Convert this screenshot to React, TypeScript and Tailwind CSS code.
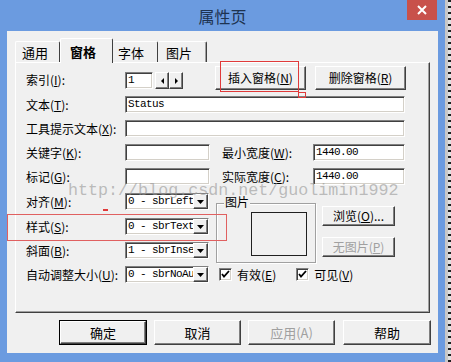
import React from "react";

const sunken =
  "border border-t-[#808080] border-l-[#808080] border-b-white border-r-white shadow-[inset_1px_1px_0_#404040,inset_-1px_-1px_0_#d4d0c8]";
const raised =
  "border border-t-white border-l-white border-b-[#404040] border-r-[#404040] shadow-[inset_-1px_-1px_0_#808080]";

function Label({ text, k, w = "w-[99px]" }: { text: string; k: string; w?: string }) {
  return (
    <div className={`${w} shrink-0 text-[12px] leading-none text-black whitespace-nowrap`}>
      {text}(<span className="underline">{k}</span>):
    </div>
  );
}

function Field({ w, value = "" }: { w: string; value?: string }) {
  return (
    <div
      className={`${w} h-[17px] bg-white ${sunken} flex items-center pl-[2px] font-['Liberation_Mono',monospace] text-[11px] tracking-[-0.6px] text-black overflow-hidden whitespace-nowrap`}
    >
      {value}
    </div>
  );
}

function Combo({ value }: { value: string }) {
  return (
    <div className={`w-[84px] h-[17px] bg-white ${sunken} flex items-stretch`}>
      <div className="flex-1 overflow-hidden whitespace-nowrap pl-[2px] pt-[1px] font-['Liberation_Mono',monospace] text-[11px] tracking-[-0.6px] text-black leading-[13px]">
        {value}
      </div>
      <div className={`w-[15px] bg-[#f0f0f0] ${raised} flex items-center justify-center`}>
        <svg width="7" height="4" viewBox="0 0 7 4">
          <path d="M0 0h7L3.5 4z" fill="#000" />
        </svg>
      </div>
    </div>
  );
}

function Btn({
  children,
  w,
  h,
  disabled = false,
  def = false,
  text = "text-[12px]",
}: {
  children: React.ReactNode;
  w: string;
  h: string;
  disabled?: boolean;
  def?: boolean;
  text?: string;
}) {
  const inner = (
    <div
      className={`w-full h-full bg-[#f0f0f0] ${raised} flex items-center justify-center ${text} leading-none ${
        disabled ? "text-[#a0a0a0]" : "text-black"
      } whitespace-nowrap`}
    >
      {children}
    </div>
  );
  if (def) {
    return <div className={`${w} ${h} border border-black shrink-0`}>{inner}</div>;
  }
  return <div className={`${w} ${h} shrink-0`}>{inner}</div>;
}

function Check({ label, k }: { label: string; k: string }) {
  return (
    <div className="flex items-center">
      <div className={`w-[13px] h-[13px] bg-white ${sunken} flex items-center justify-center`}>
        <svg width="9" height="9" viewBox="0 0 9 9">
          <path d="M1 4l2 2.5L8 1" stroke="#000" strokeWidth="1.8" fill="none" />
        </svg>
      </div>
      <span className="ml-[5px] text-[12px] leading-none text-black">
        {label}(<span className="underline">{k}</span>)
      </span>
    </div>
  );
}

export default function App() {
  return (
    <div className="relative w-[451px] h-[362px] flex overflow-hidden bg-[#6b9be0] font-['Noto_Sans_CJK_SC','Noto_Sans',sans-serif]">
      <div className="w-[445px] h-full flex flex-col">
        {/* title bar */}
        <div className="relative h-[31px] shrink-0 flex items-center justify-center">
          <span className="text-[16px] leading-none text-[#1e3350]">属性页</span>
          <div className="absolute right-[8px] top-0 w-[30px] h-[20px] bg-[#c8514b] flex items-center justify-center">
            <svg width="10" height="10" viewBox="0 0 10 10">
              <path d="M1 1l8 8M9 1l-8 8" stroke="#fff" strokeWidth="2" />
            </svg>
          </div>
        </div>
        {/* client */}
        <div className="mx-[7px] h-[322px] bg-[#f0f0f0] flex flex-col">
          {/* tabs */}
          <div className="h-[31px] flex items-end pl-[8px] pt-[7px]">
            <div className="w-[45px] h-[21px] border-t border-l border-white border-r border-r-[#404040] rounded-t-[2px] flex items-center pl-[6px] text-[13px] leading-none text-black">
              通用
            </div>
            <div className="relative z-10 -mb-px w-[53px] h-[25px] bg-[#f0f0f0] border-t border-l border-white border-r border-r-[#404040] rounded-t-[2px] flex items-center pl-[9px] text-[13px] font-bold leading-none text-black">
              窗格
            </div>
            <div className="w-[45px] h-[21px] border-t border-white border-r border-r-[#404040] rounded-t-[2px] flex items-center pl-[5px] text-[13px] leading-none text-black">
              字体
            </div>
            <div className="w-[49px] h-[21px] border-t border-white border-r border-r-[#404040] shadow-[inset_-1px_0_0_#a0a0a0] rounded-t-[2px] flex items-center pl-[8px] text-[13px] leading-none text-black">
              图片
            </div>
          </div>
          {/* panel */}
          <div className="mx-[8px] h-[251px] border border-t-white border-l-white border-r-[#404040] border-b-[#404040] shadow-[inset_-1px_-1px_0_#a0a0a0] pl-[10px] pt-[3px] flex flex-col">
            {/* row 1 */}
            <div className="h-[24px] flex items-start">
              <div className="h-[24px] flex items-center pt-[4px]">
                <Label text="索引" k="I" />
              </div>
              <div className="mt-[6px] flex">
                <Field w="w-[28px]" value="1" />
                <div className={`ml-[2px] w-[14px] h-[17px] bg-[#f0f0f0] ${raised} flex items-center justify-center`}>
                  <svg width="3" height="6" viewBox="0 0 3 6">
                    <path d="M3 0v6L0 3z" fill="#000" />
                  </svg>
                </div>
                <div className={`w-[14px] h-[17px] bg-[#f0f0f0] ${raised} flex items-center justify-center`}>
                  <svg width="3" height="6" viewBox="0 0 3 6">
                    <path d="M0 0v6L3 3z" fill="#000" />
                  </svg>
                </div>
              </div>
              <div className="ml-[32px]">
                <Btn w="w-[91px]" h="h-[24px]">
                  插入窗格(<span className="underline">N</span>)
                </Btn>
              </div>
              <div className="ml-[9px]">
                <Btn w="w-[91px]" h="h-[24px]">
                  删除窗格(<span className="underline">R</span>)
                </Btn>
              </div>
            </div>
            {/* text */}
            <div className="mt-[6px] h-[17px] flex items-center">
              <Label text="文本" k="T" />
              <Field w="w-[280px]" value="Status" />
            </div>
            <div className="mt-[7px] h-[17px] flex items-center">
              <Label text="工具提示文本" k="X" />
              <Field w="w-[280px]" />
            </div>
            <div className="mt-[7px] h-[17px] flex items-center">
              <Label text="关键字" k="K" />
              <Field w="w-[85px]" />
              <div className="ml-[12px]">
                <Label text="最小宽度" k="W" w="w-[91px]" />
              </div>
              <Field w="w-[92px]" value="1440.00" />
            </div>
            <div className="mt-[7px] h-[17px] flex items-center">
              <Label text="标记" k="G" />
              <Field w="w-[85px]" />
              <div className="ml-[12px]">
                <Label text="实际宽度" k="C" w="w-[91px]" />
              </div>
              <Field w="w-[92px]" value="1440.00" />
            </div>
            {/* lower section */}
            <div className="mt-[8px] flex">
              <div className="flex flex-col">
                <div className="h-[17px] flex items-center">
                  <Label text="对齐" k="M" />
                  <Combo value="0 - sbrLeft" />
                </div>
                <div className="mt-[8px] h-[17px] flex items-center">
                  <Label text="样式" k="S" />
                  <Combo value="0 - sbrText" />
                </div>
                <div className="mt-[7px] h-[17px] flex items-center">
                  <Label text="斜面" k="B" />
                  <Combo value="1 - sbrInset" />
                </div>
                <div className="mt-[7px] h-[17px] flex items-center">
                  <Label text="自动调整大小" k="U" />
                  <Combo value="0 - sbrNoAutoSize" />
                </div>
              </div>
              <div className="ml-[7px] flex flex-col">
                <div className="flex">
                  <div className="relative mt-[10px] w-[100px] h-[60px] border border-[#a0a0a0] shadow-[inset_1px_1px_0_#fff,1px_1px_0_#fff]">
                    <div className="absolute left-[7px] top-[-8px] px-[1px] bg-[#f0f0f0] text-[12px] leading-none text-black">
                      图片
                    </div>
                    <div className="absolute left-[34px] top-[8px] w-[56px] h-[44px] border border-[#202020] bg-[#f0f0f0]" />
                  </div>
                  <div className="ml-[6px] flex flex-col">
                    <div className="mt-[13px]">
                      <Btn w="w-[73px]" h="h-[20px]">
                        浏览(<span className="underline">O</span>)...
                      </Btn>
                    </div>
                    <div className="mt-[11px]">
                      <Btn w="w-[73px]" h="h-[20px]" disabled>
                        无图片(<span className="underline">P</span>)
                      </Btn>
                    </div>
                  </div>
                </div>
                <div className="mt-[5px] ml-[3px] flex">
                  <Check label="有效" k="E" />
                  <div className="ml-[20px]">
                    <Check label="可见" k="V" />
                  </div>
                </div>
              </div>
            </div>
          </div>
          {/* bottom buttons */}
          <div className="mt-[7px] flex pl-[52px]">
            <Btn w="w-[88px]" h="h-[25px]" def text="text-[13px]">
              确定
            </Btn>
            <div className="ml-[7px]">
              <Btn w="w-[87px]" h="h-[25px]" text="text-[13px]">
                取消
              </Btn>
            </div>
            <div className="ml-[7px]">
              <Btn w="w-[87px]" h="h-[25px]" disabled text="text-[13px]">
                应用(A)
              </Btn>
            </div>
            <div className="ml-[8px]">
              <Btn w="w-[88px]" h="h-[25px]" text="text-[13px]">
                帮助
              </Btn>
            </div>
          </div>
        </div>
      </div>
      {/* right strip */}
      <div className="w-[6px] h-full bg-[#c8c8c8] flex justify-end">
        <div className="w-[3px] h-full bg-[repeating-linear-gradient(to_bottom,#202020_0px,#202020_2px,#e0e0e0_2px,#e0e0e0_6px)]" />
      </div>

      {/* watermark */}
      <div className="absolute left-[68px] top-[183px] font-['Liberation_Mono',monospace] text-[16.7px] leading-none text-[rgba(150,150,150,0.6)] whitespace-nowrap pointer-events-none">
        http://blog.csdn.net/guolimin1992
      </div>
      {/* annotations */}
      <div className="absolute left-[220px] top-[61px] w-[79px] h-[31px] border border-[#e03a3a]" />
      <div className="absolute left-[298px] top-[92px] w-[8px] h-[6px] border border-[#e03a3a]" />
      <div className="absolute left-[7px] top-[214px] w-[220px] h-[27px] border border-[#e06060]" />
      <div className="absolute left-[103px] top-[209px] w-[5px] h-[2px] bg-[#e03a3a]" />
    </div>
  );
}
